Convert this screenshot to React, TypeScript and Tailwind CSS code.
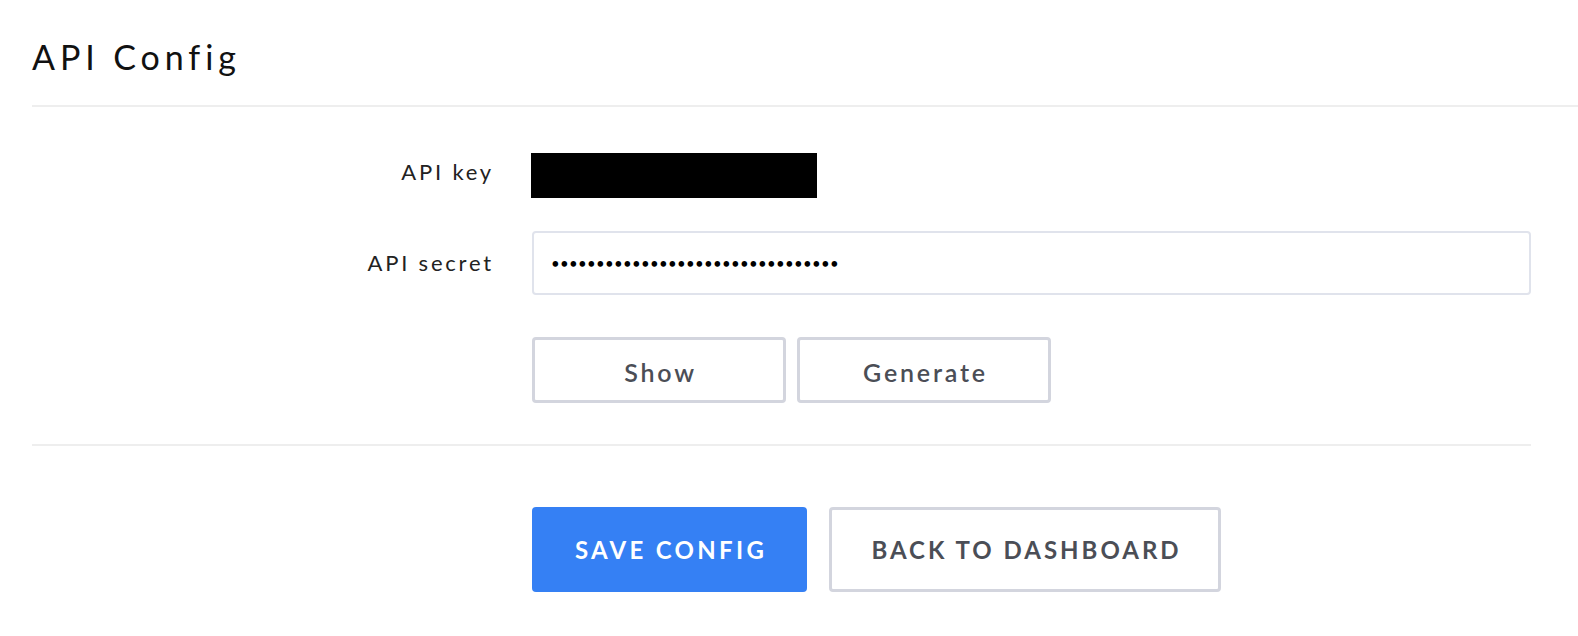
const font = { fontFamily: "Lato, 'Noto Sans', sans-serif" };

export default function App() {
  const secret = "•".repeat(32);

  return (
    <div className="min-h-screen bg-white text-black" style={font}>
      {/* Header */}
      <div className="ml-8 h-[107px] border-b-2 border-[#eeeeee]">
        <h1 className="pt-[37px] text-[34px] leading-[1.2] font-normal tracking-[4.9px] text-[#111111]">API Config</h1>
      </div>

      <div className="mr-[47px]">
        {/* API key */}
        <div className="mt-[46px] flex items-center">
          <label className="-mr-[3px] mb-[7px] w-[494px] text-right text-[22px] leading-6 tracking-[2.8px] text-[#222222]">API key</label>
          <div className="ml-[40px] h-[45px] w-[286px] bg-black" />
        </div>

        {/* API secret */}
        <div className="mt-[33px] flex items-center">
          <label className="-mr-[3px] w-[494px] text-right text-[22px] leading-6 tracking-[2.8px] text-[#222222]">API secret</label>
          <div className="ml-[41px] flex h-[64px] flex-1 items-center rounded-[4px] border-2 border-[#e0e3ec] bg-white pl-[17px]">
            <span className="text-[15px] tracking-[0.3px] text-black">{secret}</span>
          </div>
        </div>

        <div className="mt-[42px] flex gap-[11px] pl-[532px]">
          <button className="h-[66px] w-[254px] rounded-[4px] border-[3px] border-[#d3d5de] bg-white pl-[3px] pt-[5px] text-[25px] font-semibold tracking-[2.8px] text-[#4b4e56]">
            Show
          </button>
          <button className="h-[66px] w-[254px] rounded-[4px] border-[3px] border-[#d3d5de] bg-white pl-[3px] pt-[5px] text-[25px] font-semibold tracking-[2.8px] text-[#4b4e56]">
            Generate
          </button>
        </div>

        <div className="ml-8 mt-[41px] border-b-2 border-[#eeeeee]" />

        <div className="mt-[61px] flex gap-[22px] pl-[532px]">
          <button className="h-[85px] w-[275px] rounded-[4px] bg-[#3580f4] pl-[3px] text-[24px] font-bold tracking-[3.3px] text-white">
            SAVE CONFIG
          </button>
          <button className="h-[85px] w-[392px] rounded-[4px] border-[3px] border-[#d3d5de] bg-white pl-[3px] text-[24px] font-bold tracking-[3px] text-[#4b4e56]">
            BACK TO DASHBOARD
          </button>
        </div>
      </div>
    </div>
  );
}
